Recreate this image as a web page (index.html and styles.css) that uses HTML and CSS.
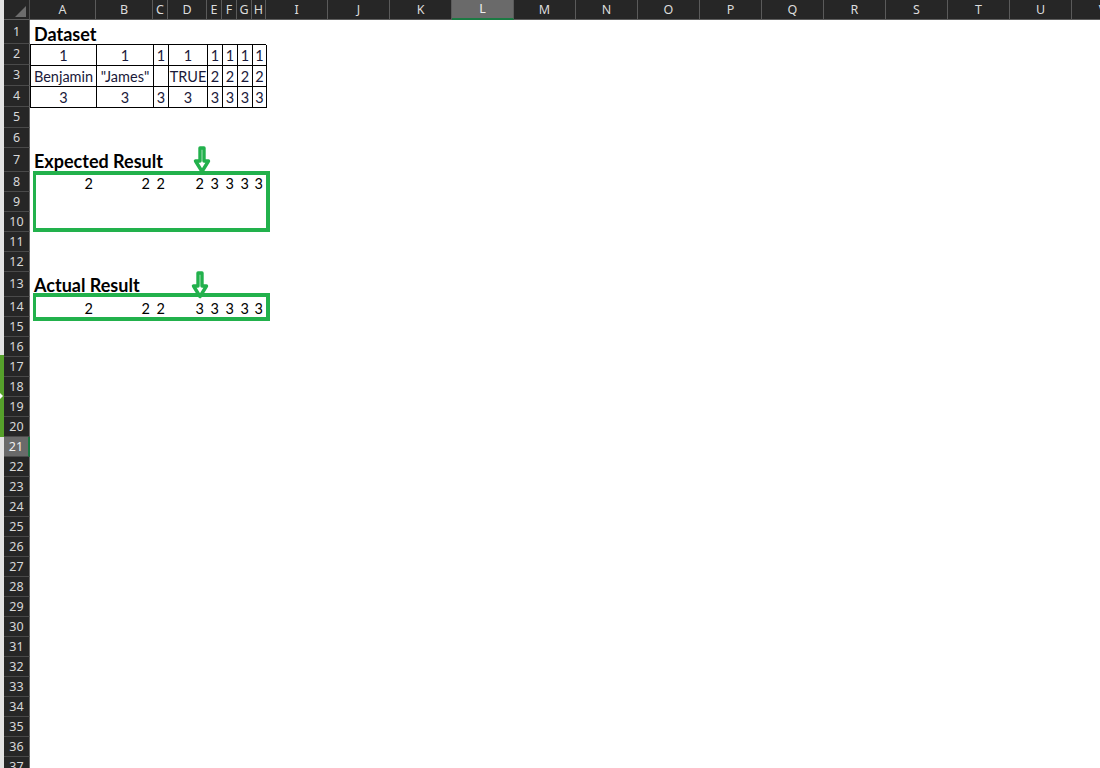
FILE: index.html
```html
<!DOCTYPE html>
<html>
<head>
<meta charset="utf-8">
<link rel="stylesheet" href="styles.css">
</head>
<body>
<div class="app">
  <div class="strip">
    <div class="strip-top"></div>
    <div class="strip-green"><span class="strip-tri"></span></div>
    <div class="strip-rest"></div>
  </div>
  <div class="main">
    <div class="colhdr">
      <div class="corner"><span class="corner-tri"></span></div>
      <div class="ch w-a">A</div>
      <div class="ch w-b">B</div>
      <div class="ch w-c">C</div>
      <div class="ch w-d">D</div>
      <div class="ch w-e">E</div>
      <div class="ch w-f">F</div>
      <div class="ch w-g">G</div>
      <div class="ch w-h">H</div>
      <div class="ch w-n">I</div>
      <div class="ch w-n">J</div>
      <div class="ch w-n">K</div>
      <div class="ch w-n sel">L</div>
      <div class="ch w-n">M</div>
      <div class="ch w-n">N</div>
      <div class="ch w-n">O</div>
      <div class="ch w-n">P</div>
      <div class="ch w-n">Q</div>
      <div class="ch w-n">R</div>
      <div class="ch w-n">S</div>
      <div class="ch w-n">T</div>
      <div class="ch w-n">U</div>
      <div class="ch w-n">V</div>
    </div>
    <div class="body">
      <div class="rowhdrs">
        <div class="rh h24">1</div>
        <div class="rh h21">2</div>
        <div class="rh h21">3</div>
        <div class="rh h21">4</div>
        <div class="rh h21">5</div>
        <div class="rh">6</div>
        <div class="rh h24">7</div>
        <div class="rh">8</div>
        <div class="rh">9</div>
        <div class="rh">10</div>
        <div class="rh">11</div>
        <div class="rh">12</div>
        <div class="rh h25">13</div>
        <div class="rh">14</div>
        <div class="rh">15</div>
        <div class="rh">16</div>
        <div class="rh">17</div>
        <div class="rh">18</div>
        <div class="rh">19</div>
        <div class="rh">20</div>
        <div class="rh rsel">21</div>
        <div class="rh">22</div>
        <div class="rh">23</div>
        <div class="rh">24</div>
        <div class="rh">25</div>
        <div class="rh">26</div>
        <div class="rh">27</div>
        <div class="rh">28</div>
        <div class="rh">29</div>
        <div class="rh">30</div>
        <div class="rh">31</div>
        <div class="rh">32</div>
        <div class="rh">33</div>
        <div class="rh">34</div>
        <div class="rh">35</div>
        <div class="rh">36</div>
        <div class="rh">37</div>
      </div>
      <div class="content">
        <div class="row h24 title title-first">Dataset</div>
        <div class="dtable">
          <div class="dc">1</div><div class="dc">1</div><div class="dc">1</div><div class="dc">1</div><div class="dc">1</div><div class="dc">1</div><div class="dc">1</div><div class="dc">1</div>
          <div class="dc">Benjamin</div><div class="dc">"James"</div><div class="dc"></div><div class="dc">TRUE</div><div class="dc">2</div><div class="dc">2</div><div class="dc">2</div><div class="dc">2</div>
          <div class="dc">3</div><div class="dc">3</div><div class="dc">3</div><div class="dc">3</div><div class="dc">3</div><div class="dc">3</div><div class="dc">3</div><div class="dc">3</div>
        </div>
        <div class="row h21"></div>
        <div class="row"></div>
        <div class="row h24 title">Expected Result</div>
        <div class="row vrow">
          <div class="vc w-a">2</div><div class="vc w-b">2</div><div class="vc w-c">2</div><div class="vc w-d">2</div><div class="vc w-e">3</div><div class="vc w-f">3</div><div class="vc w-g">3</div><div class="vc w-h">3</div>
        </div>
        <div class="row"></div>
        <div class="row"></div>
        <div class="row"></div>
        <div class="row"></div>
        <div class="row h25 title">Actual Result</div>
        <div class="row vrow">
          <div class="vc w-a">2</div><div class="vc w-b">2</div><div class="vc w-c">2</div><div class="vc w-d">3</div><div class="vc w-e">3</div><div class="vc w-f">3</div><div class="vc w-g">3</div><div class="vc w-h">3</div>
        </div>

        <div class="gbox gbox1"></div>
        <div class="gbox gbox2"></div>
        <svg class="arrow arrow1" width="18" height="28" viewBox="0 0 18 28"><polygon points="7,2 11,2 11,15 15.5,15 9,25.5 2.5,15 7,15" fill="#fff" stroke="#22b14c" stroke-width="3.4" stroke-linejoin="round"/></svg>
        <svg class="arrow arrow2" width="18" height="28" viewBox="0 0 18 28"><polygon points="7,2 11,2 11,15 15.5,15 9,25.5 2.5,15 7,15" fill="#fff" stroke="#22b14c" stroke-width="3.4" stroke-linejoin="round"/></svg>
      </div>
    </div>
  </div>
</div>
</body>
</html>
```

FILE: styles.css
```css
html, body {
  margin: 0;
  padding: 0;
  width: 1100px;
  height: 768px;
  overflow: hidden;
  background: #fff;
}

.app {
  display: flex;
  height: 768px;
}

.strip {
  width: 4px;
  flex: none;
  display: flex;
  flex-direction: column;
}
.strip-top { height: 355px; background: #e3e3e3; }
.strip-green {
  height: 82px;
  background: #56a12b;
  display: flex;
  align-items: center;
}
.strip-tri {
  width: 0;
  height: 0;
  border-top: 3px solid transparent;
  border-bottom: 3px solid transparent;
  border-left: 3px solid #fff;
}
.strip-rest { flex: 1; background: #e3e3e3; }

.main {
  flex: 1;
  display: flex;
  flex-direction: column;
  min-width: 0;
}

.colhdr {
  display: flex;
  height: 20px;
  flex: none;
  background: #262626;
}
.corner {
  width: 26px;
  flex: none;
  box-sizing: border-box;
  border-right: 1px solid #4f4f4f;
  border-bottom: 1px solid #5e5e5e;
  position: relative;
}
.corner-tri {
  position: absolute;
  right: 3px;
  bottom: 2px;
  width: 0;
  height: 0;
  border-left: 11px solid transparent;
  border-bottom: 11px solid #6d6d6d;
}
.ch {
  flex: none;
  box-sizing: border-box;
  border-right: 1px solid #5a5a5a;
  border-bottom: 1px solid #5e5e5e;
  color: #dcdcdc;
  font-family: "Noto Sans", "Open Sans", sans-serif;
  font-size: 12.5px;
  line-height: 19px;
  text-align: center;
}
.ch.sel {
  background: #6a6a6a;
  color: #f0f0f0;
  border-bottom: 2px solid #1c7a43;
  line-height: 18px;
}

.w-a { width: 66px; }
.w-b { width: 57px; }
.w-c { width: 15px; }
.w-d { width: 39px; }
.w-e { width: 15px; }
.w-f { width: 15px; }
.w-g { width: 15px; }
.w-h { width: 14px; }
.w-n { width: 62px; }

.body {
  display: flex;
  flex: 1;
  min-height: 0;
}

.rowhdrs {
  width: 26px;
  flex: none;
  display: flex;
  flex-direction: column;
  background: #262626;
}
.rh {
  height: 20px;
  flex: none;
  box-sizing: border-box;
  border-bottom: 1px solid #4a4a4a;
  border-right: 1px solid #6a6a6a;
  color: #d8d8d8;
  font-family: "Noto Sans", "Open Sans", sans-serif;
  font-size: 12.5px;
  display: flex;
  align-items: center;
  justify-content: center;
  padding-bottom: 1px;
}
.rh.h21 { height: 21px; }
.rh.h24 { height: 24px; }
.rh.h25 { height: 25px; }
.rh.rsel {
  background: #6a6a6a;
  color: #f0f0f0;
  border-right: 2px solid #1c7a43;
}

.content {
  flex: 1;
  position: relative;
  display: flex;
  flex-direction: column;
  font-family: Lato, "Liberation Sans", sans-serif;
  font-size: 14px;
  color: #111;
}

.row {
  height: 20px;
  flex: none;
  display: flex;
}
.row.h21 { height: 21px; }
.row.h24 { height: 24px; }
.row.h25 { height: 25px; }

.title {
  font-weight: bold;
  font-size: 18px;
  align-items: center;
  padding-left: 4px;
  padding-bottom: 1px;
  box-sizing: border-box;
  line-height: 20px;
  color: #000;
}
.title.title-first {
  padding-bottom: 0;
  padding-top: 3px;
}

.dtable {
  display: grid;
  grid-template-columns: 66px 57px 15px 39px 15px 15px 15px 14px;
  grid-template-rows: 21px 21px 21px;
  width: 236px;
  box-sizing: border-box;
  border-top: 1px solid #000;
  border-left: 1px solid #000;
}
.dc {
  box-sizing: border-box;
  border-right: 1px solid #000;
  border-bottom: 1px solid #000;
  display: flex;
  align-items: center;
  justify-content: center;
  white-space: nowrap;
  overflow: visible;
  color: #1a1a3a;
  font-size: 14.5px;
  padding-top: 1px;
}

.vrow {
  align-items: center;
  font-size: 14.5px;
}
.vc {
  flex: none;
  box-sizing: border-box;
  text-align: right;
  padding-right: 3px;
  color: #000;
}

.gbox {
  position: absolute;
  box-sizing: border-box;
  border: 4px solid #22b14c;
  border-left-width: 3px;
}
.gbox1 {
  left: 3px;
  top: 151px;
  width: 237px;
  height: 61px;
}
.gbox2 {
  left: 3px;
  top: 273px;
  width: 237px;
  height: 28px;
}

.arrow {
  position: absolute;
}
.arrow1 {
  left: 163px;
  top: 126px;
}
.arrow2 {
  left: 161px;
  top: 251px;
}
```
